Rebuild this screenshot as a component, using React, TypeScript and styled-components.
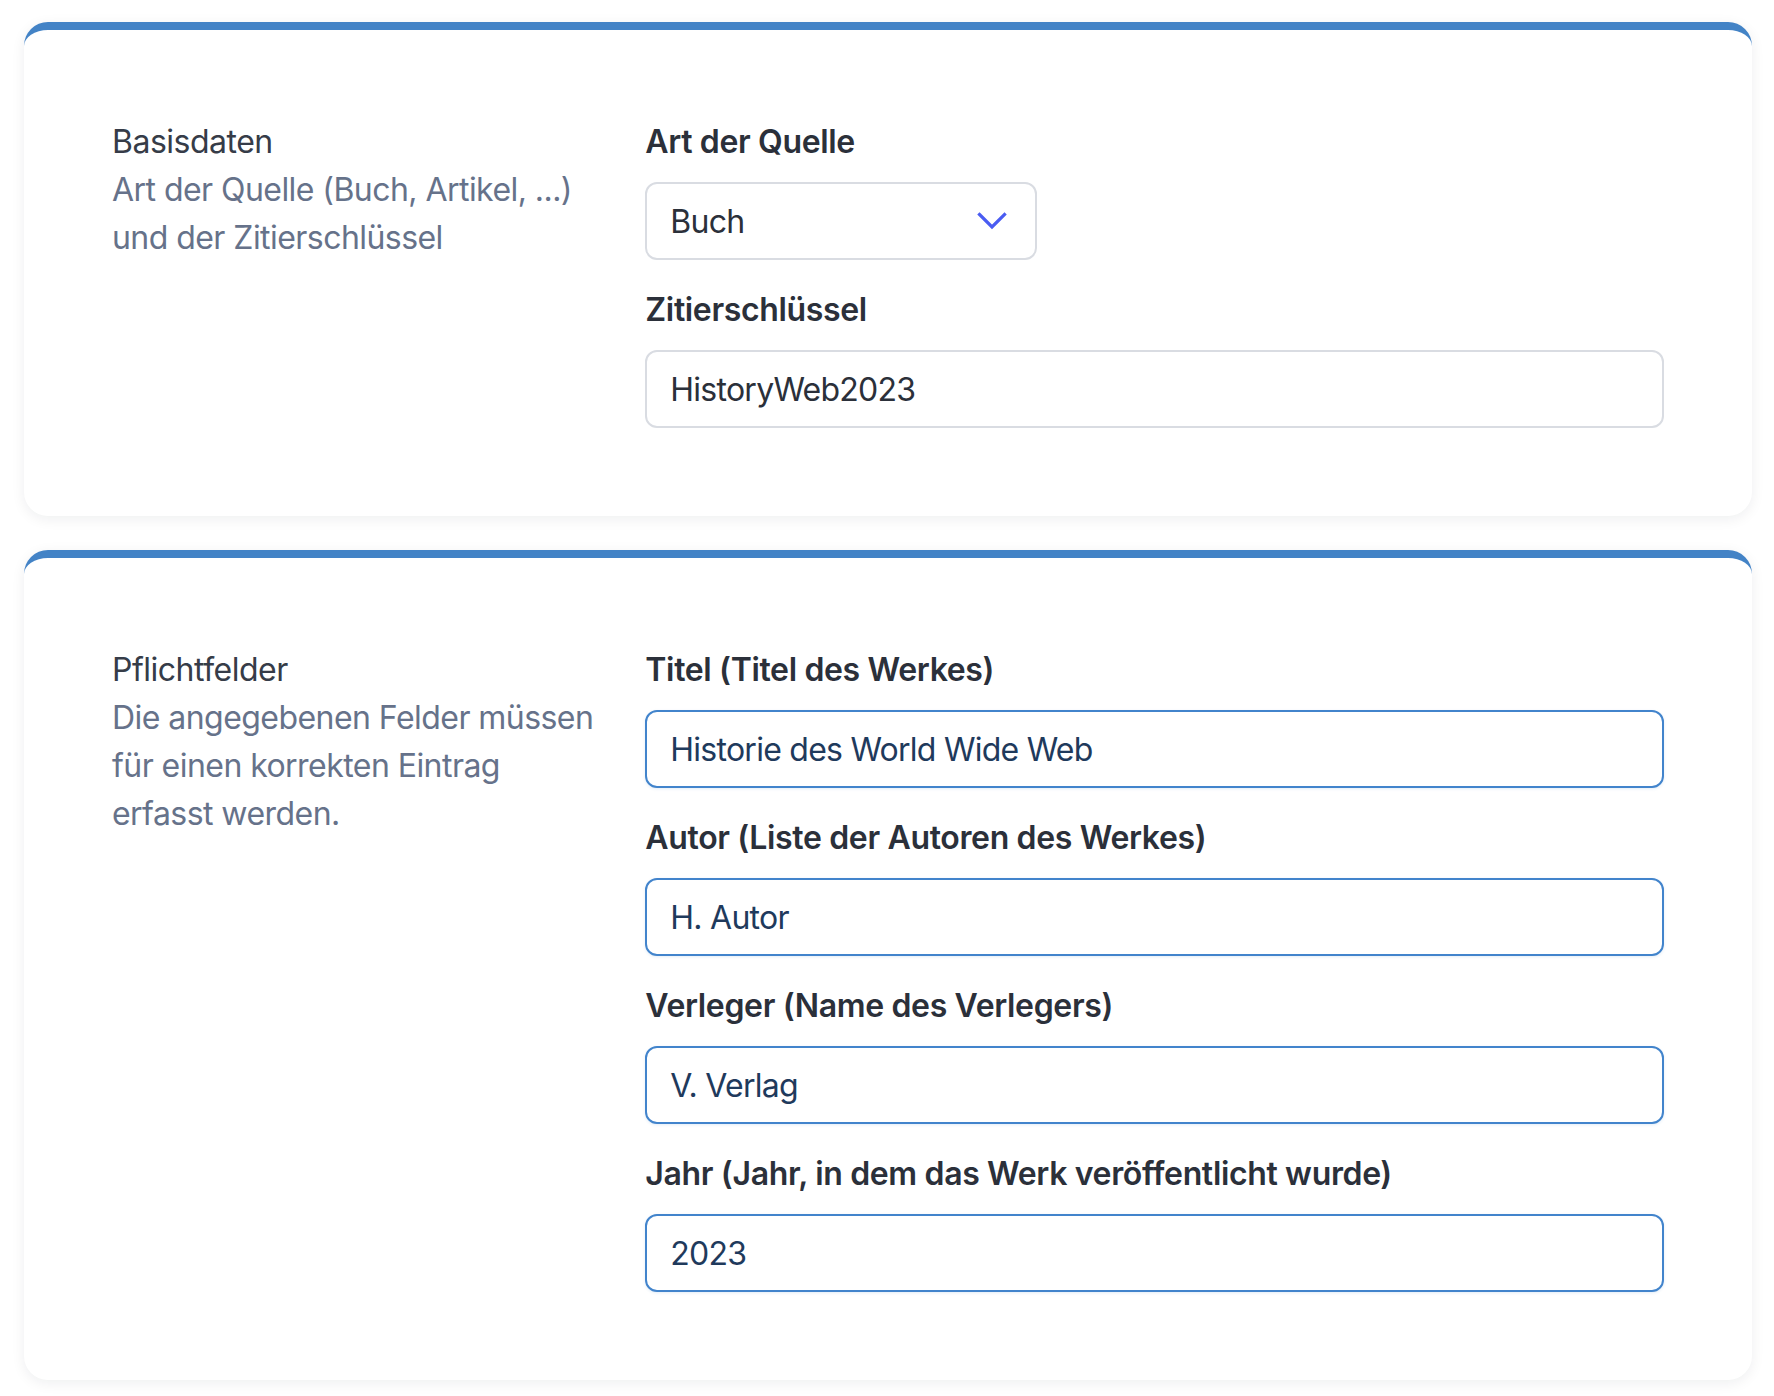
import React from "react";
import styled, { createGlobalStyle } from "styled-components";

const GlobalStyle = createGlobalStyle`
  html, body {
    margin: 0;
    padding: 0;
    background: #ffffff;
  }
  body {
    font-family: Inter, "Noto Sans", "Liberation Sans", sans-serif;
    -webkit-font-smoothing: antialiased;
  }
  * { box-sizing: border-box; }
`;

const Page = styled.div`
  display: flex;
  flex-direction: column;
  gap: 34px;
  padding: 22px 22px 14px 24px;
`;

const Card = styled.section`
  background: #ffffff;
  border-top: 8px solid #4383c6;
  border-radius: 24px;
  box-shadow: 0 3px 14px rgba(15, 23, 42, 0.07);
  padding: 88px 88px 88px 88px;
`;

const Grid = styled.div`
  display: grid;
  grid-template-columns: repeat(3, minmax(0, 1fr));
  column-gap: 48px;
`;

const Intro = styled.div`
  display: flex;
  flex-direction: column;
`;

const Title = styled.h3`
  margin: 0;
  font-size: 32px;
  line-height: 48px;
  font-weight: 400;
  letter-spacing: -0.5px;
  color: #363c48;
`;

const Description = styled.p`
  margin: 0;
  font-size: 32px;
  line-height: 48px;
  font-weight: 400;
  letter-spacing: -0.55px;
  color: #66728a;
`;

const Fields = styled.div`
  grid-column: span 2;
  display: flex;
  flex-direction: column;
  gap: 26px;
`;

const Field = styled.div`
  display: flex;
  flex-direction: column;
  gap: 16px;
`;

const Label = styled.label`
  font-size: 32px;
  line-height: 48px;
  font-weight: 600;
  letter-spacing: -0.35px;
  color: #2b303a;
`;

const TextInput = styled.input<{ $active?: boolean }>`
  width: 100%;
  height: 78px;
  margin: 0;
  padding: 0 23px;
  border-radius: 12px;
  border: 2px solid ${(p) => (p.$active ? "#4284cc" : "#d9dce2")};
  background: #ffffff;
  font-family: Inter, "Noto Sans", "Liberation Sans", sans-serif;
  font-size: 32px;
  letter-spacing: -0.75px;
  color: ${(p) => (p.$active ? "#1f3a5c" : "#2b303a")};
  outline: none;
  box-shadow: ${(p) => (p.$active ? "0 1px 3px rgba(66, 132, 204, 0.15)" : "none")};
`;

const SelectBox = styled.div`
  width: 392px;
  height: 78px;
  display: flex;
  align-items: center;
  justify-content: space-between;
  padding: 0 28px 0 23px;
  border-radius: 12px;
  border: 2px solid #d9dce2;
  background: #ffffff;
  font-size: 32px;
  letter-spacing: -0.75px;
  color: #2b303a;
  cursor: pointer;
`;

const Chevron = () => (
  <svg width="30" height="18" viewBox="0 0 30 18" fill="none" aria-hidden="true">
    <path
      d="M2.5 2.5 L15 15 L27.5 2.5"
      stroke="#4a5cf2"
      strokeWidth="3.2"
      strokeLinecap="square"
      strokeLinejoin="miter"
    />
  </svg>
);

type FieldDef = { label: string; value: string };

const required: FieldDef[] = [
  { label: "Titel (Titel des Werkes)", value: "Historie des World Wide Web" },
  { label: "Autor (Liste der Autoren des Werkes)", value: "H. Autor" },
  { label: "Verleger (Name des Verlegers)", value: "V. Verlag" },
  { label: "Jahr (Jahr, in dem das Werk veröffentlicht wurde)", value: "2023" },
];

export default function App() {
  return (
    <>
      <GlobalStyle />
      <Page>
        <Card>
          <Grid>
            <Intro>
              <Title>Basisdaten</Title>
              <Description>
                Art der Quelle (Buch, Artikel, ...) und der Zitierschlüssel
              </Description>
            </Intro>
            <Fields>
              <Field>
                <Label>Art der Quelle</Label>
                <SelectBox role="combobox" aria-expanded="false">
                  <span>Buch</span>
                  <Chevron />
                </SelectBox>
              </Field>
              <Field>
                <Label htmlFor="key">Zitierschlüssel</Label>
                <TextInput id="key" defaultValue="HistoryWeb2023" />
              </Field>
            </Fields>
          </Grid>
        </Card>
        <Card>
          <Grid>
            <Intro>
              <Title>Pflichtfelder</Title>
              <Description>
                Die angegebenen Felder müssen für einen korrekten Eintrag erfasst werden.
              </Description>
            </Intro>
            <Fields>
              {required.map((f, i) => (
                <Field key={f.label}>
                  <Label htmlFor={`req-${i}`}>{f.label}</Label>
                  <TextInput id={`req-${i}`} $active defaultValue={f.value} />
                </Field>
              ))}
            </Fields>
          </Grid>
        </Card>
      </Page>
    </>
  );
}
